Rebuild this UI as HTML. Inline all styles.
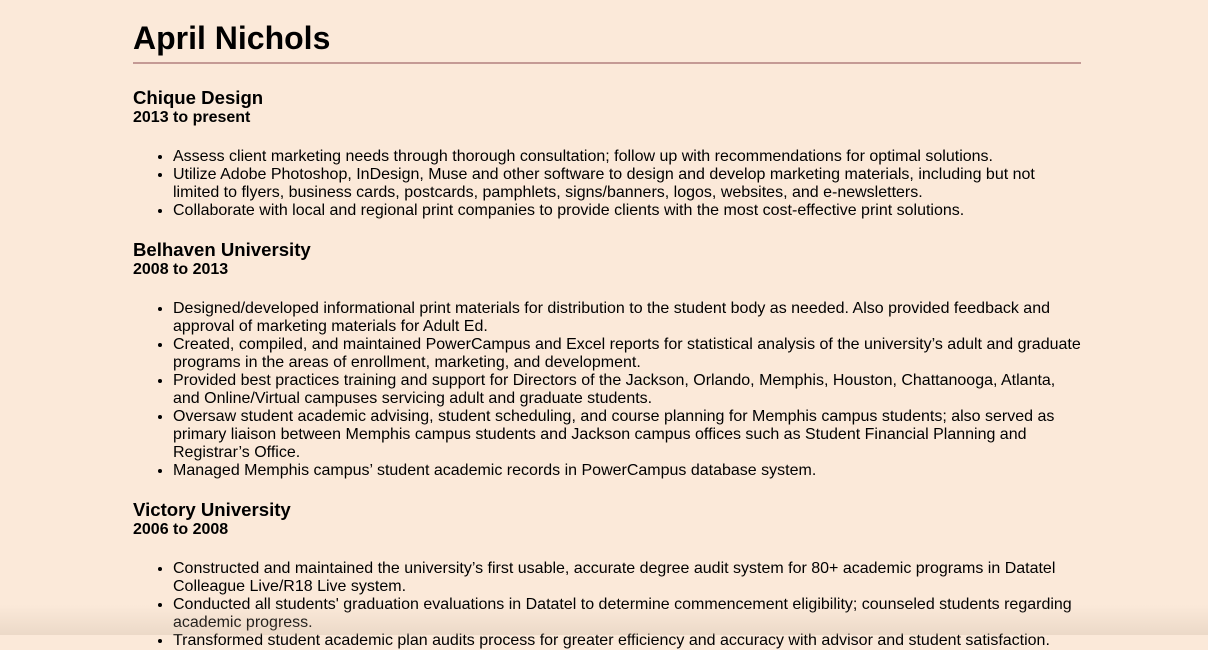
<!DOCTYPE html>
<html><head><meta charset="utf-8"><style>
html,body{margin:0;padding:0;}
body{width:1208px;height:635px;overflow:hidden;background:#fbe9d9;font-family:"Liberation Sans",Arial,sans-serif;color:#000;position:relative;}
.wrap{position:absolute;left:133px;top:0;width:948px;}
h1{font-size:32px;font-weight:bold;margin:0;position:absolute;top:20px;left:0;line-height:37px;}
hr{position:absolute;top:62px;left:0;width:948px;margin:0;border:0;border-top:2px solid #c49a95;}
.sec{position:absolute;left:0;width:948px;}
h2{font-size:18.6px;margin:0;line-height:22px;}
h3{font-size:16px;margin:0;line-height:18px;}
ul{margin:21px 0 0 0;padding-left:40px;font-size:16px;line-height:18px;}
.shade{position:absolute;left:0;right:0;bottom:0;height:30px;background:linear-gradient(rgba(200,180,160,0),rgba(200,180,160,0.3));}
</style></head><body>
<div class="wrap">
<h1>April Nichols</h1>
<hr>
<div class="sec" style="top:87px">
<h2>Chique Design</h2><h3>2013 to present</h3>
<ul>
<li>Assess client marketing needs through thorough consultation; follow up with recommendations for optimal solutions.</li>
<li>Utilize Adobe Photoshop, InDesign, Muse and other software to design and develop marketing materials, including but not limited to flyers, business cards, postcards, pamphlets, signs/banners, logos, websites, and e-newsletters.</li>
<li>Collaborate with local and regional print companies to provide clients with the most cost-effective print solutions.</li>
</ul></div>
<div class="sec" style="top:239px">
<h2>Belhaven University</h2><h3>2008 to 2013</h3>
<ul>
<li>Designed/developed informational print materials for distribution to the student body as needed. Also provided feedback and approval of marketing materials for Adult Ed.</li>
<li>Created, compiled, and maintained PowerCampus and Excel reports for statistical analysis of the university’s adult and graduate programs in the areas of enrollment, marketing, and development.</li>
<li>Provided best practices training and support for Directors of the Jackson, Orlando, Memphis, Houston, Chattanooga, Atlanta, and Online/Virtual campuses servicing adult and graduate students.</li>
<li>Oversaw student academic advising, student scheduling, and course planning for Memphis campus students; also served as primary liaison between Memphis campus students and Jackson campus offices such as Student Financial Planning and Registrar’s Office.</li>
<li>Managed Memphis campus’ student academic records in PowerCampus database system.</li>
</ul></div>
<div class="sec" style="top:499px">
<h2>Victory University</h2><h3>2006 to 2008</h3>
<ul>
<li>Constructed and maintained the university’s first usable, accurate degree audit system for 80+ academic programs in Datatel Colleague Live/R18 Live system.</li>
<li>Conducted all students' graduation evaluations in Datatel to determine commencement eligibility; counseled students regarding academic progress.</li>
<li>Transformed student academic plan audits process for greater efficiency and accuracy with advisor and student satisfaction.</li>
</ul></div>
</div>
<div class="shade"></div>
</body></html>
